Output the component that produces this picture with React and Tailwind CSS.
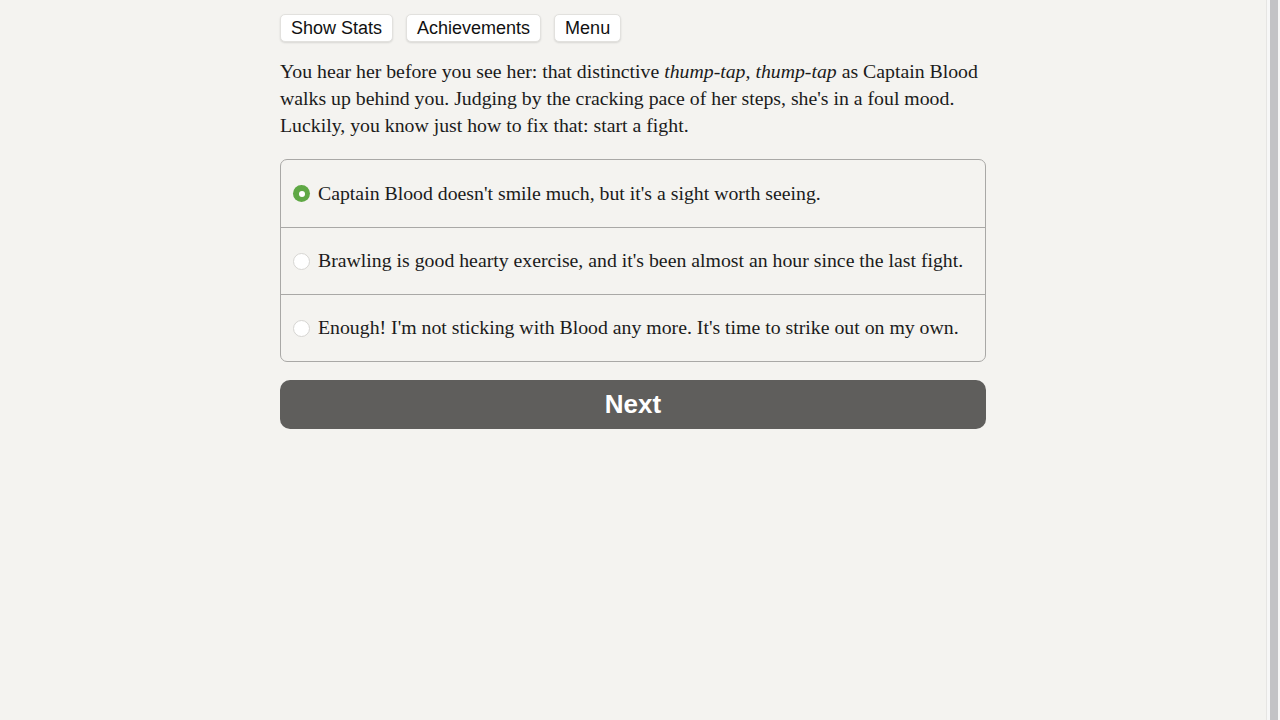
import { useState } from 'react'

const options = [
  "Captain Blood doesn't smile much, but it's a sight worth seeing.",
  "Brawling is good hearty exercise, and it's been almost an hour since the last fight.",
  "Enough! I'm not sticking with Blood any more. It's time to strike out on my own.",
]

const serif = { fontFamily: '"Liberation Serif", "DejaVu Serif", serif' }

function TopButton({ children }) {
  return (
    <button
      type="button"
      className="h-[28px] rounded-[5px] border border-[#e2e1de] bg-white px-[10px] text-[18px] leading-none text-[#111] shadow-[0_1px_2px_rgba(0,0,0,0.12)]"
    >
      {children}
    </button>
  )
}

function Radio({ checked }) {
  if (checked) {
    return (
      <span className="flex h-[17px] w-[17px] shrink-0 items-center justify-center rounded-full bg-[#5fa845]">
        <span className="h-[6px] w-[6px] rounded-full bg-white" />
      </span>
    )
  }
  return (
    <span className="h-[17px] w-[17px] shrink-0 rounded-full border border-[#d6d5d2] bg-white" />
  )
}

export default function App() {
  const [choice, setChoice] = useState(0)

  return (
    <div
      className="flex h-[720px] w-[1280px] overflow-hidden bg-[#f4f3f0]"
      style={{ fontFamily: '"Liberation Sans", Arial, sans-serif' }}
    >
      <main className="flex-1">
        <div className="mx-auto w-[706px] pt-[14px]">
          <div className="flex gap-[13px]">
            <TopButton>Show Stats</TopButton>
            <TopButton>Achievements</TopButton>
            <TopButton>Menu</TopButton>
          </div>

          <p className="mt-[16px] text-[19.8px] leading-[27px] text-[#1b1b1b]" style={serif}>
            You hear her before you see her: that distinctive <i>thump-tap, thump-tap</i> as
            Captain Blood
            <br />
            walks up behind you. Judging by the cracking pace of her steps, she's in a foul mood.
            <br />
            Luckily, you know just how to fix that: start a fight.
          </p>

          <div className="mt-[20px] overflow-hidden rounded-[7px] border border-[#a9a8a6]">
            {options.map((text, i) => (
              <label
                key={i}
                onClick={() => setChoice(i)}
                className={
                  'flex h-[67px] cursor-pointer items-center gap-[8px] pl-[12px] ' +
                  (i > 0 ? 'border-t border-[#a9a8a6]' : '')
                }
              >
                <Radio checked={choice === i} />
                <span className="text-[19.8px] text-[#1b1b1b]" style={serif}>
                  {text}
                </span>
              </label>
            ))}
          </div>

          <button
            type="button"
            className="mt-[18px] h-[49px] w-full rounded-[10px] bg-[#5f5e5c] text-[26px] font-bold text-white"
          >
            Next
          </button>
        </div>
      </main>

      <div className="flex w-[14px] shrink-0 border-l border-[#e6e5e3] bg-[#f7f7f7]">
        <div className="ml-[3px] w-[8px] bg-[#c3c3c6]" />
      </div>
    </div>
  )
}
